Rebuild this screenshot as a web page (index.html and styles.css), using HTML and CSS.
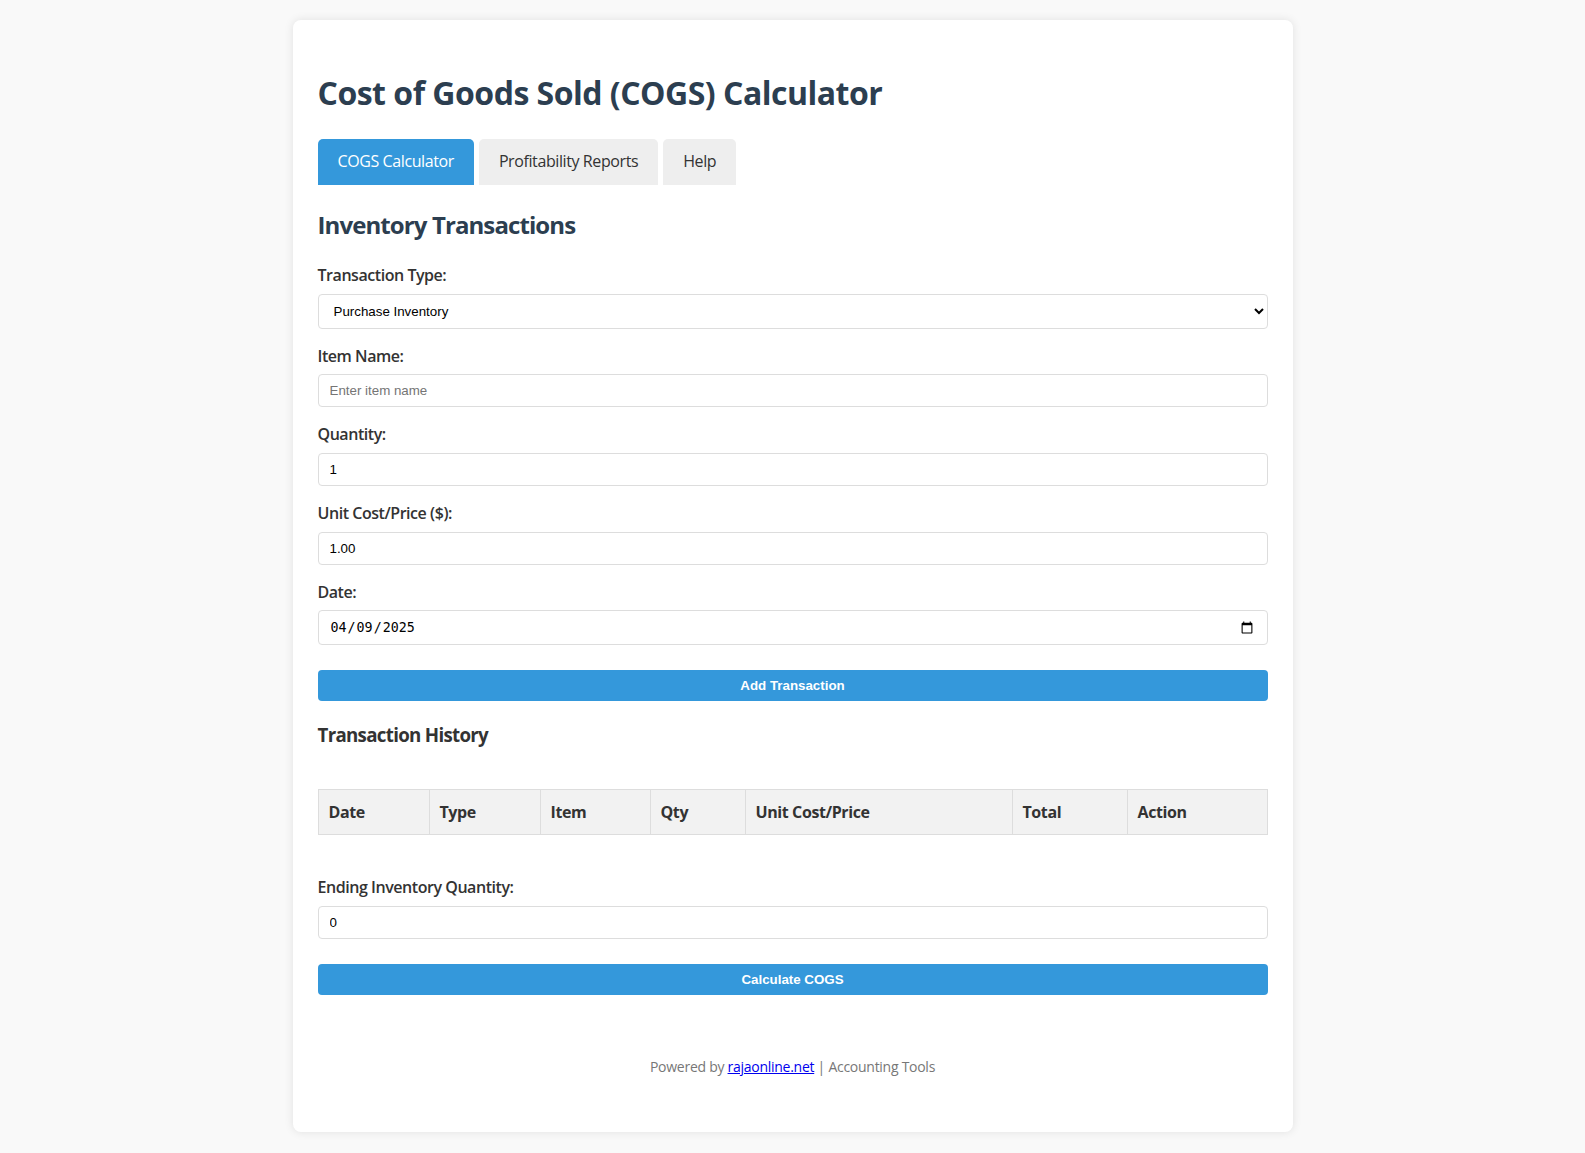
FILE: index.html
```html
<!DOCTYPE html>
<html lang="en">
<head>
<meta charset="UTF-8">
<title>Cost of Goods Sold (COGS) Calculator</title>
<link rel="stylesheet" href="styles.css">
</head>
<body>
<div class="container">
  <h1>Cost of Goods Sold (COGS) Calculator</h1>
  <div class="tabs">
    <button class="tab active">COGS Calculator</button>
    <button class="tab">Profitability Reports</button>
    <button class="tab">Help</button>
  </div>
  <div class="tab-content">
    <h2>Inventory Transactions</h2>
    <div class="form-group">
      <label for="type">Transaction Type:</label>
      <select id="type" class="field">
        <option>Purchase Inventory</option>
        <option>Sell Inventory</option>
      </select>
    </div>
    <div class="form-group">
      <label for="item">Item Name:</label>
      <input id="item" class="field" type="text" placeholder="Enter item name">
    </div>
    <div class="form-group">
      <label for="qty">Quantity:</label>
      <input id="qty" class="field" type="number" value="1">
    </div>
    <div class="form-group">
      <label for="cost">Unit Cost/Price ($):</label>
      <input id="cost" class="field" type="number" value="1.00" step="0.01">
    </div>
    <div class="form-group">
      <label for="date">Date:</label>
      <input id="date" class="field" type="date" value="2025-04-09">
    </div>
    <button class="btn">Add Transaction</button>

    <h3>Transaction History</h3>
    <table class="history">
      <thead>
        <tr>
          <th class="c-date">Date</th>
          <th class="c-type">Type</th>
          <th class="c-item">Item</th>
          <th class="c-qty">Qty</th>
          <th class="c-unit">Unit Cost/Price</th>
          <th class="c-total">Total</th>
          <th class="c-action">Action</th>
        </tr>
      </thead>
      <tbody></tbody>
    </table>

    <div class="form-group">
      <label for="ending">Ending Inventory Quantity:</label>
      <input id="ending" class="field" type="number" value="0">
    </div>
    <button class="btn">Calculate COGS</button>
  </div>
  <div class="footer">Powered by <a href="#">rajaonline.net</a> | Accounting Tools</div>
</div>
</body>
</html>
```
FILE: styles.css
```css
html, body {
  margin: 0;
}
body {
  padding: 20px;
  background: #f9f9f9;
  font-family: "Open Sans", "Noto Sans", sans-serif;
  color: #333;
  line-height: 1.6;
}
.container {
  max-width: 1000px;
  box-sizing: border-box;
  margin: 0 auto;
  padding: 25px;
  background: #fff;
  border-radius: 8px;
  box-shadow: 0 0 10px rgba(0, 0, 0, 0.1);
}
h1 {
  font-size: 32px;
  color: #2c3e50;
  margin: 22px 0 21px;
  letter-spacing: -0.5px;
}
h2 {
  font-size: 24px;
  color: #2c3e50;
  margin: 21px 0 19px;
  letter-spacing: -0.9px;
}
h3 {
  font-size: 18.72px;
  margin: 18.72px 0;
  letter-spacing: -0.7px;
}
.tabs {
  display: flex;
  gap: 5px;
}
.tab {
  font-family: inherit;
  font-size: 16px;
  line-height: 1.6;
  letter-spacing: -0.4px;
  padding: 10px 20px;
  border: none;
  border-radius: 5px 5px 0 0;
  background: #eee;
  color: #333;
}
.tab.active {
  background: #3498db;
  color: #fff;
}
.form-group {
  margin-bottom: 15px;
}
label {
  display: block;
  font-weight: 600;
  margin-bottom: 5px;
  letter-spacing: -0.45px;
}
.field {
  display: block;
  width: 100%;
  box-sizing: border-box;
  padding: 8px 11px;
  border: 1px solid #ddd;
  border-radius: 4px;
  background: #fff;
}
.btn {
  display: block;
  width: 100%;
  margin-top: 25px;
  padding: 8px;
  border: none;
  border-radius: 4px;
  background: #3498db;
  color: #fff;
  font-weight: bold;
}
.history {
  width: 100%;
  border-collapse: collapse;
  margin: 39px 0 40px;
}
.history th {
  box-sizing: border-box;
  background: #f2f2f2;
  border: 1px solid #ddd;
  padding: 10px;
  line-height: 24px;
  text-align: left;
  letter-spacing: -0.4px;
}
.c-date { width: 111px; }
.c-type { width: 111px; }
.c-item { width: 110px; }
.c-qty { width: 95px; }
.c-unit { width: 267px; }
.c-total { width: 115px; }
.c-action { width: 140px; }
.footer {
  margin-top: 40px;
  padding: 21px 0 29px;
  text-align: center;
  font-size: 14px;
  color: #777;
  letter-spacing: -0.27px;
}
.footer a {
  color: #0000ee;
}
```
